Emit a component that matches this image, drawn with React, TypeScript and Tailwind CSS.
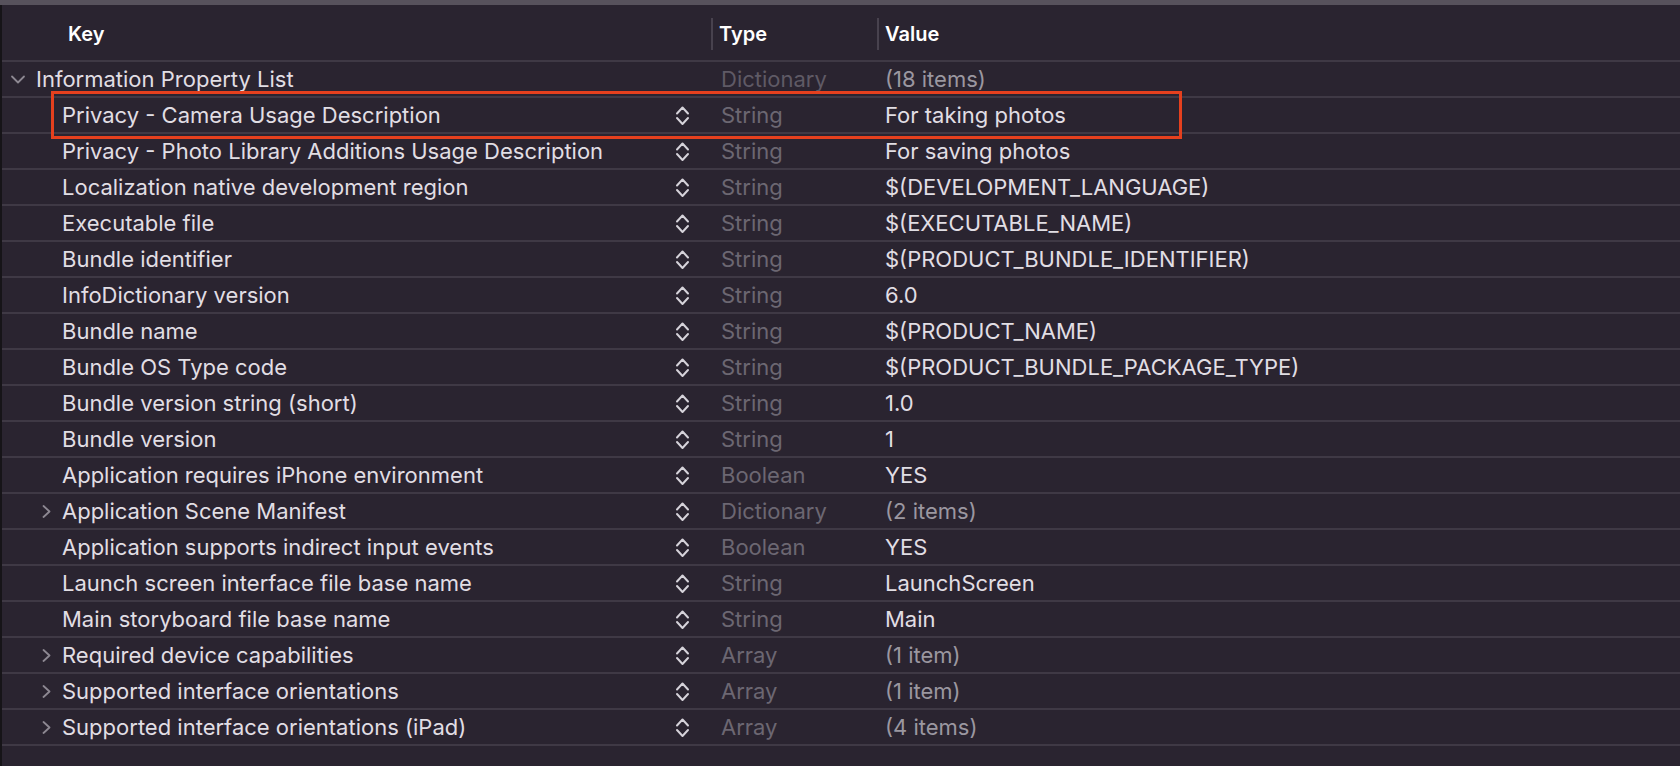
import React from 'react';

type Row = {
  key: string;
  type: string;
  value: string;
  root?: boolean;
  expandable?: boolean;
};

const rows: Row[] = [
  { key: 'Information Property List', type: 'Dictionary', value: '(18 items)', root: true },
  { key: 'Privacy - Camera Usage Description', type: 'String', value: 'For taking photos' },
  { key: 'Privacy - Photo Library Additions Usage Description', type: 'String', value: 'For saving photos' },
  { key: 'Localization native development region', type: 'String', value: '$(DEVELOPMENT_LANGUAGE)' },
  { key: 'Executable file', type: 'String', value: '$(EXECUTABLE_NAME)' },
  { key: 'Bundle identifier', type: 'String', value: '$(PRODUCT_BUNDLE_IDENTIFIER)' },
  { key: 'InfoDictionary version', type: 'String', value: '6.0' },
  { key: 'Bundle name', type: 'String', value: '$(PRODUCT_NAME)' },
  { key: 'Bundle OS Type code', type: 'String', value: '$(PRODUCT_BUNDLE_PACKAGE_TYPE)' },
  { key: 'Bundle version string (short)', type: 'String', value: '1.0' },
  { key: 'Bundle version', type: 'String', value: '1' },
  { key: 'Application requires iPhone environment', type: 'Boolean', value: 'YES' },
  { key: 'Application Scene Manifest', type: 'Dictionary', value: '(2 items)', expandable: true },
  { key: 'Application supports indirect input events', type: 'Boolean', value: 'YES' },
  { key: 'Launch screen interface file base name', type: 'String', value: 'LaunchScreen' },
  { key: 'Main storyboard file base name', type: 'String', value: 'Main' },
  { key: 'Required device capabilities', type: 'Array', value: '(1 item)', expandable: true },
  { key: 'Supported interface orientations', type: 'Array', value: '(1 item)', expandable: true },
  { key: 'Supported interface orientations (iPad)', type: 'Array', value: '(4 items)', expandable: true },
];

const font = { fontFamily: 'Inter, "Noto Sans", sans-serif' };

const Stepper = () => (
  <svg width="15" height="21" viewBox="0 0 15 21" fill="none" stroke="#d6d3da" strokeWidth="2" strokeLinecap="round" strokeLinejoin="round">
    <path d="M2 8.5 L7.5 2.5 L13 8.5" />
    <path d="M2 13 L7.5 19 L13 13" />
  </svg>
);

const ChevronDown = () => (
  <svg width="16" height="9" viewBox="0 0 16 9" fill="none" stroke="#8d8892" strokeWidth="1.8" strokeLinecap="round" strokeLinejoin="round">
    <path d="M2 1.5 L8 7.5 L14 1.5" />
  </svg>
);

const ChevronRight = () => (
  <svg width="9" height="13" viewBox="0 0 9 13" fill="none" stroke="#8d8892" strokeWidth="1.8" strokeLinecap="round" strokeLinejoin="round">
    <path d="M1.5 1 L7.5 6.5 L1.5 12" />
  </svg>
);

const isCollection = (t: string) => t === 'Dictionary' || t === 'Array';

const PlistRow = ({ row }: { row: Row }) => (
  <div className="flex h-[36px] items-center border-b-2 border-[#3f3945] text-[22px]">
    {/* key column */}
    <div className="flex h-full w-[709px] items-center">
      {row.root ? (
        <>
          <div className="ml-[8px] flex w-[26px] items-center">
            <ChevronDown />
          </div>
          <span className="text-[#e1dee4]">{row.key}</span>
        </>
      ) : (
        <>
          <div className="ml-[40px] flex w-[20px] items-center">
            {row.expandable && <ChevronRight />}
          </div>
          <span className="flex-1 truncate text-[#e1dee4]">{row.key}</span>
          <div className="mr-[21px] flex items-center">
            <Stepper />
          </div>
        </>
      )}
    </div>
    {/* type column */}
    <div className="w-[166px] pl-[10px]">
      <span className={row.root ? 'text-[#5f5a65]' : 'text-[#6c6772]'}>{row.type}</span>
    </div>
    {/* value column */}
    <div className="flex-1 pl-[8px]">
      <span className={isCollection(row.type) ? 'text-[#9b97a0]' : 'text-[#e1dee4]'}>{row.value}</span>
    </div>
  </div>
);

export default function App() {
  return (
    <div className="relative h-[766px] w-[1680px] overflow-hidden bg-[#2a2430]" style={font}>
      <div className="h-[5px] bg-[#57525c]" />
      <div className="flex h-[761px]">
        <div className="w-[2px] bg-[#161418]" />
        <div className="flex-1">
          {/* header */}
          <div className="flex h-[57px] items-center border-b-2 border-[#3f3945] pt-[2px] text-[20px] font-semibold text-white">
            <div className="w-[709px] pl-[66px]">Key</div>
            <div className="flex w-[166px] items-center">
              <div className="h-[32px] w-[2px] bg-[#48424e]" />
              <span className="pl-[6px]">Type</span>
            </div>
            <div className="flex flex-1 items-center">
              <div className="h-[32px] w-[2px] bg-[#48424e]" />
              <span className="pl-[6px]">Value</span>
            </div>
          </div>
          {rows.map((r) => (
            <PlistRow key={r.key} row={r} />
          ))}
        </div>
      </div>
      {/* highlight annotation */}
      <div className="pointer-events-none absolute left-[51px] top-[91px] h-[48px] w-[1131px] border-[3px] border-[#e5401e]" />
    </div>
  );
}
